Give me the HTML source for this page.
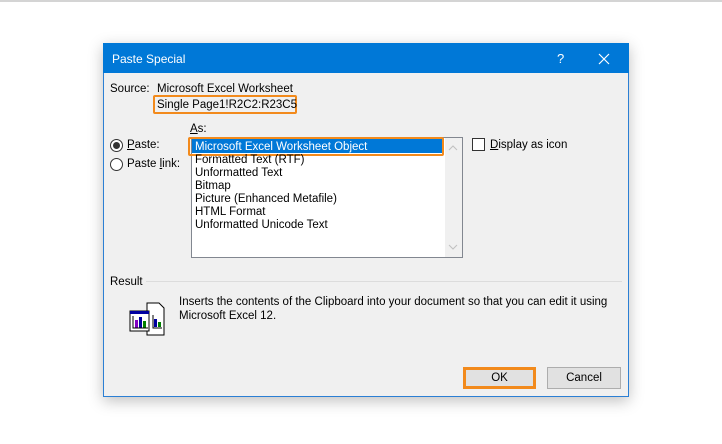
<!DOCTYPE html>
<html><head><style>
body{margin:0;width:722px;height:444px;background:#fff;position:relative;overflow:hidden;font-family:"Liberation Sans",sans-serif;font-size:11.5px;color:#000}
.a{position:absolute;white-space:nowrap}
u{text-decoration:underline}
</style></head><body>
<div class="a" style="left:0;top:0;width:722px;height:2px;background:#d4d4d4"></div>
<div class="a" style="left:103px;top:43px;width:526px;height:354px;background:#f0f0f0;border:1px solid #2b7fd4;box-sizing:border-box;box-shadow:0 4px 14px rgba(0,0,0,0.25)"></div>
<div class="a" style="left:103px;top:43px;width:526px;height:30px;background:#0078d7"></div>
<div class="a" style="left:112px;top:52px;color:#fff;font-size:12px">Paste Special</div>
<div class="a" style="left:557px;top:51px;color:#fff;font-size:13px">?</div>
<svg class="a" style="left:598px;top:53px" width="12" height="12"><path d="M1 1L11 11M11 1L1 11" stroke="#fff" stroke-width="1.2"/></svg>
<div class="a" style="left:110px;top:83px">Source:</div>
<div class="a" style="left:157px;top:83px">Microsoft Excel Worksheet</div>
<div class="a" style="left:153px;top:95px;width:144px;height:19px;border:2px solid #f28a1c;box-sizing:border-box;border-radius:2px"></div>
<div class="a" style="left:157px;top:99px">Single Page1!R2C2:R23C5</div>
<div class="a" style="left:190px;top:123px"><u>A</u>s:</div>
<div class="a" style="left:110px;top:139px;width:13px;height:13px;border:1px solid #333;border-radius:50%;box-sizing:border-box;background:#fff"></div>
<div class="a" style="left:113px;top:142px;width:7px;height:7px;border-radius:50%;background:#333"></div>
<div class="a" style="left:127px;top:139px"><u>P</u>aste:</div>
<div class="a" style="left:110px;top:158px;width:13px;height:13px;border:1px solid #333;border-radius:50%;box-sizing:border-box;background:#fff"></div>
<div class="a" style="left:127px;top:158px">Paste <u>l</u>ink:</div>
<div class="a" style="left:191px;top:137px;width:272px;height:121px;border:1px solid #828790;background:#fff;box-sizing:border-box"></div>
<div class="a" style="left:445px;top:138px;width:17px;height:119px;background:#f0f0f0"></div>
<svg class="a" style="left:448px;top:145px" width="10" height="6"><path d="M1 5L5 1L9 5" fill="none" stroke="#c0c0c0"/></svg>
<svg class="a" style="left:448px;top:244px" width="10" height="6"><path d="M1 1L5 5L9 1" fill="none" stroke="#c0c0c0"/></svg>
<div class="a" style="left:192px;top:139px;width:250px;height:14px;background:#0078d7"></div>
<div class="a" style="left:188px;top:137px;width:256px;height:19px;border:2px solid #f28a1c;box-sizing:border-box;border-radius:2px"></div>
<div class="a" style="left:195px;top:141px;color:#fff">Microsoft Excel Worksheet Object</div>
<div class="a" style="left:195px;top:154px;line-height:13px">Formatted Text (RTF)<br>Unformatted Text<br>Bitmap<br>Picture (Enhanced Metafile)<br>HTML Format<br>Unformatted Unicode Text</div>
<div class="a" style="left:472px;top:138px;width:13px;height:13px;border:1px solid #333;box-sizing:border-box;background:#fff"></div>
<div class="a" style="left:490px;top:139px"><u>D</u>isplay as icon</div>
<div class="a" style="left:110px;top:276px">Result</div>
<div class="a" style="left:146px;top:281px;width:476px;height:1px;background:#dcdcdc"></div>
<svg class="a" style="left:129px;top:302px" width="42" height="34">
<path d="M18 1H30L35 6V33H18Z" fill="#fff" stroke="#000"/>
<rect x="1" y="9" width="19" height="20" fill="#fff" stroke="#000"/>
<rect x="1" y="9" width="19" height="3" fill="#0000a0"/>
<rect x="6" y="18" width="3" height="8" fill="#8000c0"/><rect x="10" y="15" width="3" height="11" fill="#0000a0"/><rect x="14" y="19" width="3" height="7" fill="#008000"/>
<path d="M4 14V26H19" fill="none" stroke="#000"/>
<rect x="25" y="17" width="3" height="8" fill="#0000a0"/><rect x="29" y="20" width="3" height="5" fill="#008000"/>
<path d="M24 13V26H33" fill="none" stroke="#000"/>
</svg>
<div class="a" style="left:179px;top:295px;line-height:14px">Inserts the contents of the Clipboard into your document so that you can edit it using<br>Microsoft Excel 12.</div>
<div class="a" style="left:463px;top:367px;width:73px;height:22px;background:#e1e1e1;border:3px solid #f28a1c;box-sizing:border-box;text-align:center;line-height:16px">OK</div>
<div class="a" style="left:547px;top:367px;width:74px;height:22px;background:#e1e1e1;border:1px solid #adadad;box-sizing:border-box;text-align:center;line-height:20px">Cancel</div>
</body></html>
